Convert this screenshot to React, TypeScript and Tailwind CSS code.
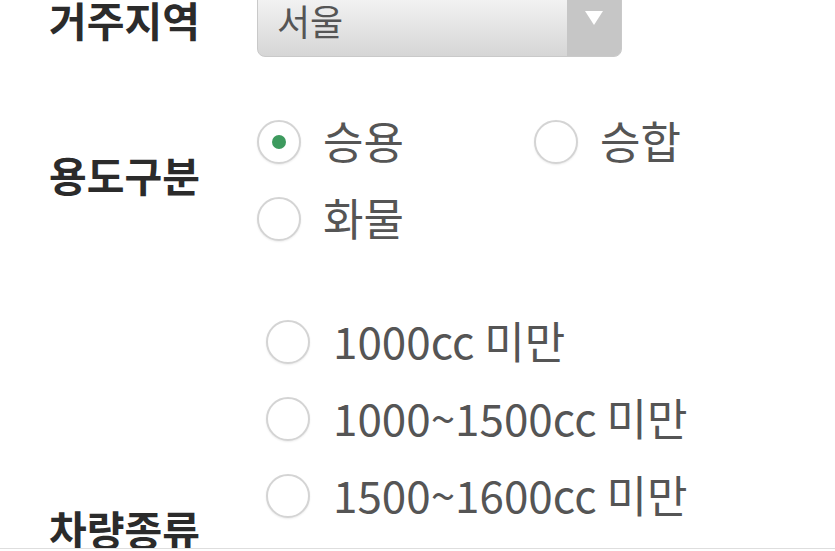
import React from "react";

const carTypes = [
  "1000cc 미만",
  "1000~1500cc 미만",
  "1500~1600cc 미만",
  "1600~2000cc 미만",
  "2000cc 이상",
  "전기차",
];

function Radio({ checked }: { checked?: boolean }) {
  return (
    <span className="flex h-[44px] w-[44px] shrink-0 items-center justify-center rounded-full border-2 border-[#d4d4d4] bg-white shadow-[0_1px_2px_rgba(0,0,0,0.08)]">
      {checked ? <span className="h-[14px] w-[14px] rounded-full bg-[#3d9a5e]" /> : null}
    </span>
  );
}

function Option({ label, checked, gap }: { label: string; checked?: boolean; gap: string }) {
  return (
    <label className={`flex h-[77px] items-center ${gap} text-[44px] leading-none text-[#555]`}>
      <Radio checked={checked} />
      <span className="pb-[4px]">{label}</span>
    </label>
  );
}

function Row({ title, shift = "mb-[12px]", children }: { title: string; shift?: string; children: React.ReactNode }) {
  return (
    <div className="flex items-center">
      <div className={`${shift} w-[257px] shrink-0 pl-[49px] text-[41px] font-bold leading-none text-[#2b2b2b]`}>{title}</div>
      <div className="flex-1">{children}</div>
    </div>
  );
}

export default function App() {
  return (
    <div
      className="relative h-[551px] w-[835px] overflow-hidden bg-white"
      style={{ fontFamily: '"Noto Sans CJK KR", "Noto Sans", sans-serif' }}
    >
      <div className="-mt-[12px] flex flex-col gap-[46px]">
        <Row title="거주지역" shift="mb-[6px]">
          <div className="flex h-[69px] w-[365px] overflow-hidden rounded-[8px] border border-[#c9c9c9] bg-gradient-to-b from-[#f7f7f7] to-[#d6d6d6]">
            <div className="flex flex-1 items-center pb-[6px] pl-[19px] text-[36px] leading-none text-[#555]">서울</div>
            <div className="flex w-[54px] items-start justify-center bg-[#c6c6c6] pt-[22px]">
              <span className="h-0 w-0 border-x-[9px] border-t-[14px] border-x-transparent border-t-white" />
            </div>
          </div>
        </Row>
        <Row title="용도구분">
          <div className="grid grid-cols-[277px_1fr]">
            <Option label="승용" checked gap="gap-[22px]" />
            <Option label="승합" gap="gap-[22px]" />
            <Option label="화물" gap="gap-[22px]" />
          </div>
        </Row>
        <Row title="차량종류">
          <div className="flex flex-col pl-[9px]">
            {carTypes.map((t) => (
              <Option key={t} label={t} gap="gap-[23px]" />
            ))}
          </div>
        </Row>
      </div>
      <div className="absolute bottom-0 left-0 right-0 h-[3px] border-t border-[#dedede] bg-white" />
    </div>
  );
}
